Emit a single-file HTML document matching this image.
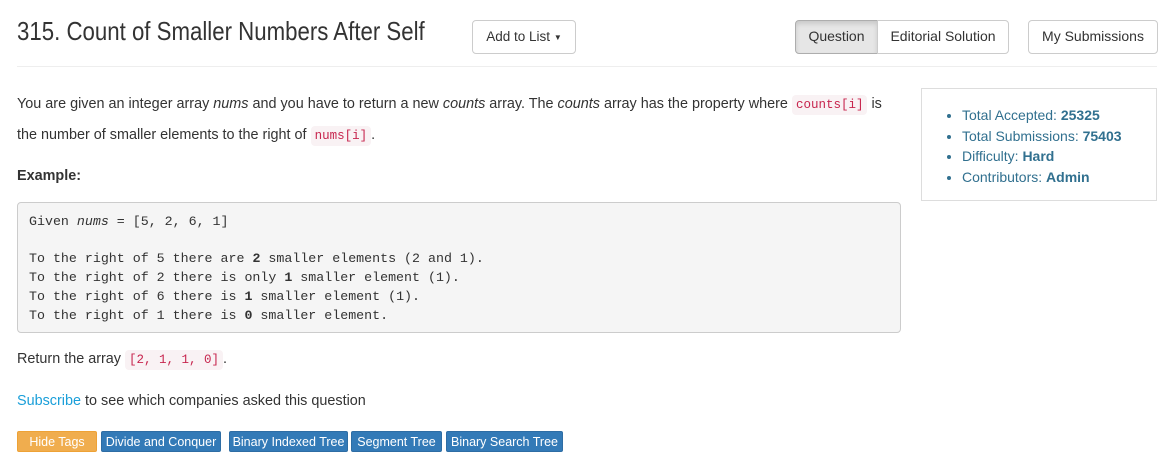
<!DOCTYPE html>
<html><head><meta charset="utf-8"><style>
body{margin:0;width:1173px;height:458px;background:#fff;font-family:"Liberation Sans",sans-serif;color:#333;position:relative;overflow:hidden}
.a{position:absolute}
.btn{position:absolute;box-sizing:border-box;border:1px solid #ccc;border-radius:4px;background:#fff;font-size:14px;color:#333;text-align:center;line-height:31px;height:34px}
p{margin:0;font-size:14.4px;position:absolute;left:17px;white-space:nowrap}
code{font-family:"Liberation Mono",monospace;font-size:12.5px;color:#c7254e;background:#f9f2f4;padding:3px 4px;border-radius:4px}
pre{position:absolute;left:17px;top:202px;width:884px;height:131px;box-sizing:border-box;margin:0;background:#f5f5f5;border:1px solid #ccc;border-radius:4px;font-family:"Liberation Mono",monospace;font-size:13.3px;line-height:18.7px;padding:10px 11px;color:#333}
.tag{position:absolute;top:431px;height:21px;line-height:20px;font-size:12.5px;color:#fff;background:#337ab7;border:1px solid #2e6da4;box-sizing:border-box;border-radius:2px;text-align:center;white-space:nowrap}
ul{margin:0;padding:0 0 0 40px;font-size:14px;color:#31708f;line-height:20.5px}
</style></head><body>
<div class="a" style="left:17px;top:16px;font-size:26px;color:#333;white-space:nowrap;transform:scaleX(0.855);transform-origin:0 0">315. Count of Smaller Numbers After Self</div>
<div class="btn" style="left:472px;top:20px;width:104px;font-size:13.5px">Add to List <span style="font-size:8px;vertical-align:1px">▼</span></div>
<div class="btn" style="left:795px;top:20px;width:83px;background:#e6e6e6;border-color:#adadad;border-radius:4px 0 0 4px;box-shadow:inset 0 3px 5px rgba(0,0,0,.125)">Question</div>
<div class="btn" style="left:877px;top:20px;width:132px;border-radius:0 4px 4px 0">Editorial Solution</div>
<div class="btn" style="left:1028px;top:20px;width:130px">My Submissions</div>
<div class="a" style="left:17px;top:66px;width:1140px;height:1px;background:#eee"></div>
<p style="top:96px">You are given an integer array <i>nums</i> and you have to return a new <i>counts</i> array. The <i>counts</i> array has the property where <code>counts[i]</code> is</p>
<p style="top:127px">the number of smaller elements to the right of <code>nums[i]</code>.</p>
<p style="top:168px;font-weight:bold">Example:</p>
<pre>Given <i>nums</i> = [5, 2, 6, 1]

To the right of 5 there are <b>2</b> smaller elements (2 and 1).
To the right of 2 there is only <b>1</b> smaller element (1).
To the right of 6 there is <b>1</b> smaller element (1).
To the right of 1 there is <b>0</b> smaller element.</pre>
<p style="top:351px">Return the array <code>[2, 1, 1, 0]</code>.</p>
<p style="top:393px"><span style="color:#1a9fd9">Subscribe</span> to see which companies asked this question</p>
<div class="tag" style="left:17px;width:80px;background:#f0ad4e;border-color:#eea236">Hide Tags</div>
<div class="tag" style="left:101px;width:120px">Divide and Conquer</div>
<div class="tag" style="left:229px;width:119px">Binary Indexed Tree</div>
<div class="tag" style="left:351px;width:91px">Segment Tree</div>
<div class="tag" style="left:446px;width:117px">Binary Search Tree</div>
<div class="a" style="left:921px;top:88px;width:236px;height:113px;box-sizing:border-box;border:1px solid #ddd;padding-top:16px">
<ul><li>Total Accepted: <b>25325</b></li><li>Total Submissions: <b>75403</b></li><li>Difficulty: <b>Hard</b></li><li>Contributors: <b>Admin</b></li></ul></div>
</body></html>
